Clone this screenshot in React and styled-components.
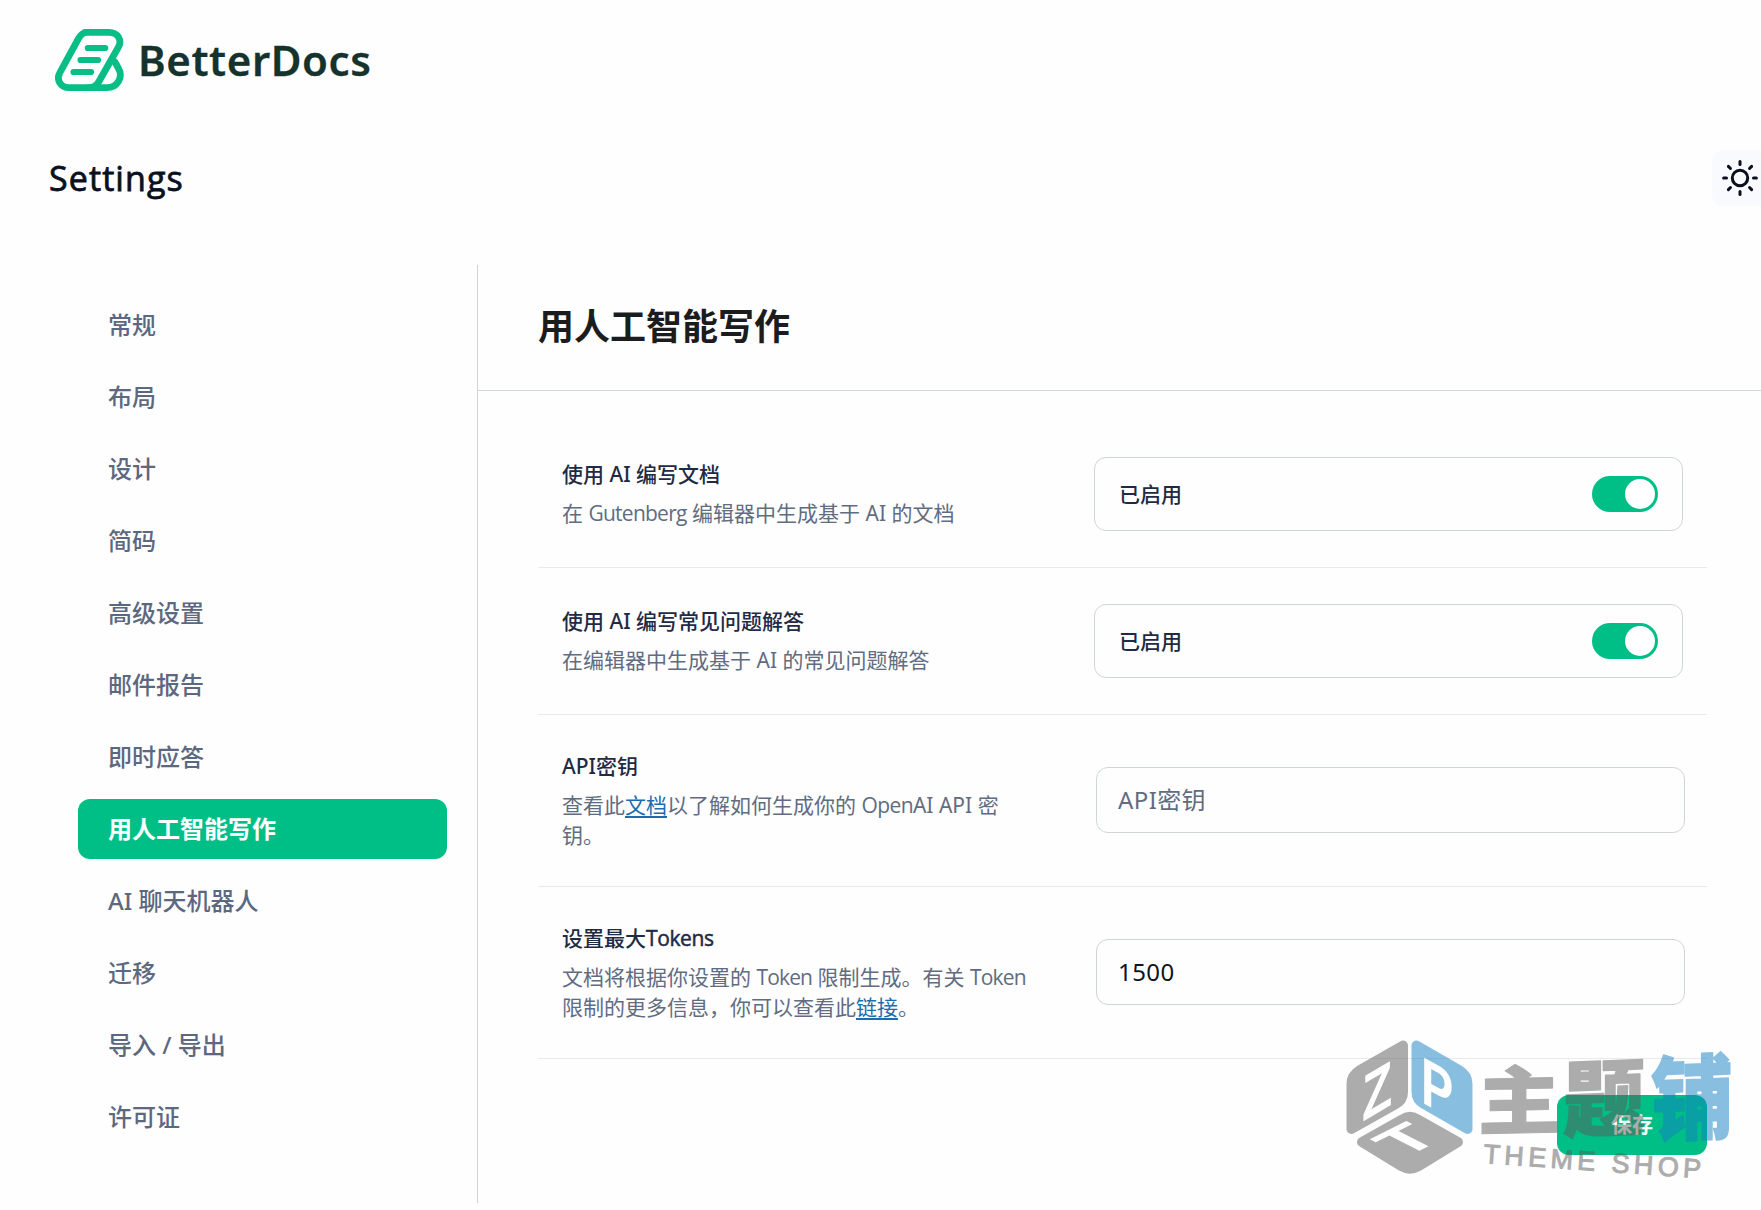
import React, { useState } from 'react';
import styled, { createGlobalStyle } from 'styled-components';

const GlobalStyle = createGlobalStyle`
  *, *::before, *::after { box-sizing: border-box; }
  body {
    margin: 0;
    background: #fefefe;
    color: #1d2939;
    font-family: 'Noto Sans', 'Noto Sans CJK SC', sans-serif;
    overflow: hidden;
  }
`;

const Page = styled.div`
  position: relative;
  width: 1761px;
  height: 1210px;
  overflow: hidden;
`;

const BrandBar = styled.header`
  display: flex;
  align-items: center;
  height: 120px;
  padding-left: 55px;
  gap: 14px;
`;

const BrandName = styled.span`
  color: #16322d;
  font-size: 42px;
  font-weight: 600;
  line-height: 60px;
  letter-spacing: 0.6px;
  -webkit-text-stroke: 0.3px #16322d;
`;

const TitleBar = styled.div`
  display: flex;
  align-items: center;
  justify-content: space-between;
  height: 56px;
  margin-top: 30px;
  padding-left: 49px;
`;

const PageTitle = styled.h1`
  margin: 0;
  color: #0b1020;
  font-family: 'Open Sans', 'Noto Sans', sans-serif;
  font-size: 34px;
  font-weight: 500;
  line-height: 48px;
  letter-spacing: 1.1px;
  -webkit-text-stroke: 0.8px #0b1020;
`;

const ThemeButton = styled.button`
  display: flex;
  align-items: center;
  width: 49px;
  height: 56px;
  padding: 0 0 0 8px;
  border: 0;
  border-radius: 12px 0 0 12px;
  background: #f8fafe;
`;

const Body = styled.div`
  display: flex;
  height: 938px;
  margin-top: 59px;
`;

const Sidebar = styled.nav`
  display: flex;
  flex-direction: column;
  gap: 12px;
  width: 478px;
  padding: 30px 30px 0 78px;
  border-right: 1px solid #d2d5d8;
`;

const NavItem = styled.a`
  display: flex;
  align-items: center;
  flex: none;
  height: 60px;
  padding-left: 30px;
  border-radius: 12px;
  background: ${(p) => (p.$active ? '#00bf86' : 'transparent')};
  color: ${(p) => (p.$active ? '#ffffff' : '#5c6880')};
  font-size: 24px;
  font-weight: ${(p) => (p.$active ? 700 : 500)};
  line-height: 36px;
  white-space: pre;
`;

const Panel = styled.main`
  display: flex;
  flex-direction: column;
  flex: 1;
`;

const PanelHeader = styled.div`
  display: flex;
  align-items: center;
  height: 126px;
  padding: 0 0 2px 60px;
  border-bottom: 1px solid #d2d8da;
`;

const PanelTitle = styled.h2`
  margin: 0;
  color: #1a1c1e;
  font-size: 36px;
  font-weight: 700;
  line-height: 50px;
`;

const Fields = styled.div`
  display: flex;
  flex-direction: column;
  padding: 30px 54px 0 60px;
`;

const FieldRow = styled.div`
  display: flex;
  align-items: center;
  justify-content: space-between;
  padding: 36px ${(p) => (p.$inset ? 22 : 24)}px 36px 24px;
  border-bottom: 1px solid #e8eaec;
`;

const FieldText = styled.div`
  display: flex;
  flex-direction: column;
  gap: 9px;
  width: 490px;
  padding-bottom: ${(p) => (p.$lifted ? 2 : 0)}px;
`;

const FieldTitle = styled.div`
  color: #1f2a44;
  font-size: 21px;
  font-weight: 500;
  line-height: 30px;
  white-space: nowrap;
`;

const FieldHelp = styled.div`
  color: #616c81;
  font-size: 21px;
  line-height: 30px;
  white-space: nowrap;
`;

const Word = styled.span`
  font-family: 'Open Sans', 'Noto Sans', sans-serif;
  letter-spacing: ${(p) => p.$track || 0}px;
  -webkit-text-stroke: ${(p) => (p.$strong ? 0.5 : 0)}px currentColor;
`;

const HelpLink = styled.a`
  color: #1c6cb0;
  text-decoration: underline;
  text-decoration-thickness: 2px;
  text-underline-offset: 3px;
`;

const ToggleBox = styled.div`
  display: flex;
  align-items: center;
  justify-content: space-between;
  width: 589px;
  height: 74px;
  padding: 0 24px 0 24px;
  border: 1px solid #d0d5d8;
  border-radius: 12px;
`;

const ToggleState = styled.span`
  padding-bottom: 1px;
  color: #1f2a44;
  font-size: 21px;
  font-weight: 500;
  line-height: 30px;
`;

const Switch = styled.button`
  display: flex;
  align-items: center;
  justify-content: ${(p) => (p.$on ? 'flex-end' : 'flex-start')};
  width: 66px;
  height: 36px;
  padding: 0 3px;
  border: 0;
  border-radius: 18px;
  background: ${(p) => (p.$on ? '#00bf86' : '#cdd3da')};
`;

const Knob = styled.span`
  width: 30px;
  height: 30px;
  border-radius: 50%;
  background: #ffffff;
`;

const TextInput = styled.input`
  width: 589px;
  height: 66px;
  margin: 0 0 1px;
  padding: 0 21px 2px;
  border: 1px solid #d0d5d8;
  border-radius: 12px;
  outline: 0;
  background: transparent;
  color: #0d1424;
  font-family: inherit;
  font-size: 24px;
  letter-spacing: 0.4px;
  &::placeholder { color: #616c81; opacity: 1; }
`;

const Actions = styled.div`
  display: flex;
  justify-content: flex-end;
  padding: 36px 54px 0 0;
`;

const SaveButton = styled.button`
  width: 150px;
  height: 60px;
  padding: 0 0 3px;
  border: 0;
  border-radius: 12px;
  background: #00bf86;
  color: #ffffff;
  font-family: inherit;
  font-size: 21px;
  font-weight: 700;
  line-height: 30px;
`;

const Watermark = styled.svg`
  position: absolute;
  left: 1340px;
  top: 1020px;
  opacity: 0.5;
  pointer-events: none;
`;

function LogoMark() {
  return (
    <svg width="69" height="62" viewBox="0 0 69 62" fill="none" stroke="#09bd86" strokeLinecap="round" strokeLinejoin="round">
      <path
        d="M30 3.4H54C63 3.4 67.5 11.5 63.2 18.5L43.5 53.2Q40.4 58.6 34 58.6H14C5.5 58.6 0.8 50.5 5 43.4L23.5 9.5Q27 3.4 32 3.4"
        strokeWidth="6.8"
      />
      <path d="M34 58.6H52C62.5 58.6 68.5 48 63.5 39.5Q61.5 35.5 59.5 32.5" strokeWidth="6.8" />
      <path d="M32.8 19H50.2M25.5 31H43M18.5 43H36" strokeWidth="6.2" />
    </svg>
  );
}

function SunIcon() {
  const rays = [0, 45, 90, 135, 180, 225, 270, 315];
  return (
    <svg width="40" height="40" viewBox="-20 -20 40 40" fill="none" stroke="#0a0f1e" strokeWidth="3" strokeLinecap="round">
      <circle r="7.7" />
      {rays.map((r) => (
        <path key={r} d="M0 -13.5V-16.4" transform={`rotate(${r})`} />
      ))}
    </svg>
  );
}

function ShopWatermark() {
  const grey = '#5c5c5c';
  const blue = '#1480c2';
  return (
    <Watermark width="421" height="190" viewBox="0 -10 421 190" aria-hidden="true">
      <g strokeWidth="10" strokeLinejoin="round">
        <path d="M63 15.5L20 40Q11.5 45 11.5 54V99L56 74Q63 70 63 62Z" fill={grey} stroke={grey} />
        <path d="M76.5 15.5L119 40Q127.5 45 127.5 54V99L84 74Q76.5 70 76.5 62Z" fill={blue} stroke={blue} />
        <path d="M62 89.5Q70 84 78 89.5L118 112L78 136.5Q70 141 62 136.5L22 112Z" fill={grey} stroke={grey} />
      </g>
      <g fill="#ffffff" fontFamily="'Liberation Sans', sans-serif" fontWeight="700" fontSize="62">
        <text transform="matrix(0.8 -0.47 0 1.04 22 92)">Z</text>
        <text transform="matrix(0.78 0.43 0 1.08 81 72)">P</text>
        <text transform="matrix(1 -0.5 0.84 0.43 65 128)">T</text>
      </g>
      <g fontFamily="'Noto Sans CJK SC', sans-serif" fontWeight="900" strokeLinejoin="round">
        <text transform="matrix(1.03 -0.02 0 0.93 138 99)" fontSize="80" fill={grey} stroke={grey} strokeWidth="1">主</text>
        <text transform="matrix(1 -0.04 0 1.02 223 101)" fontSize="82" fill={grey} stroke={grey} strokeWidth="1.4">题</text>
        <text transform="matrix(1 -0.04 0 1.12 311 104)" fontSize="82" fill={blue} stroke={blue} strokeWidth="1.6">铺</text>
      </g>
      <text
        transform="translate(143 133) rotate(4)"
        fontFamily="'Liberation Sans', sans-serif"
        fontSize="27"
        textLength="218"
        fill={grey}
        stroke={grey}
        strokeWidth="1"
      >
        THEME SHOP
      </text>
    </Watermark>
  );
}

const NAV = ['常规', '布局', '设计', '简码', '高级设置', '邮件报告', '即时应答', '用人工智能写作', 'AI 聊天机器人', '迁移', '导入 / 导出', '许可证'];

function ToggleField({ title, help }) {
  const [on, setOn] = useState(true);
  return (
    <FieldRow>
      <FieldText $lifted>
        <FieldTitle>{title}</FieldTitle>
        <FieldHelp>{help}</FieldHelp>
      </FieldText>
      <ToggleBox>
        <ToggleState>已启用</ToggleState>
        <Switch $on={on} onClick={() => setOn(!on)}>
          <Knob />
        </Switch>
      </ToggleBox>
    </FieldRow>
  );
}

function InputField({ title, help, ...input }) {
  return (
    <FieldRow $inset>
      <FieldText>
        <FieldTitle>{title}</FieldTitle>
        <FieldHelp>{help}</FieldHelp>
      </FieldText>
      <TextInput {...input} />
    </FieldRow>
  );
}

export default function App() {
  const [active, setActive] = useState('用人工智能写作');
  return (
    <Page>
      <GlobalStyle />
      <BrandBar>
        <LogoMark />
        <BrandName>BetterDocs</BrandName>
      </BrandBar>
      <TitleBar>
        <PageTitle>Settings</PageTitle>
        <ThemeButton>
          <SunIcon />
        </ThemeButton>
      </TitleBar>
      <Body>
        <Sidebar>
          {NAV.map((label) => (
            <NavItem key={label} $active={label === active} onClick={() => setActive(label)}>
              {label}
            </NavItem>
          ))}
        </Sidebar>
        <Panel>
          <PanelHeader>
            <PanelTitle>用人工智能写作</PanelTitle>
          </PanelHeader>
          <Fields>
            <ToggleField
              title="使用 AI 编写文档"
              help={<>在 <Word $track={-0.75}>Gutenberg</Word> 编辑器中生成基于 AI 的文档</>}
            />
            <ToggleField title="使用 AI 编写常见问题解答" help="在编辑器中生成基于 AI 的常见问题解答" />
            <InputField
              title="API密钥"
              help={<>查看此<HelpLink>文档</HelpLink>以了解如何生成你的 <Word $track={-0.6}>Open</Word>AI API 密<br />钥。</>}
              placeholder="API密钥"
            />
            <InputField
              title={<>设置最大<Word $strong $track={-0.4}>Tokens</Word></>}
              help={<>文档将根据你设置的 <Word $track={-0.85}>Token</Word> 限制生成。有关 <Word $track={-0.85}>Token</Word><br />限制的更多信息，你可以查看此<HelpLink>链接</HelpLink>。</>}
              defaultValue="1500"
            />
          </Fields>
          <Actions>
            <SaveButton>保存</SaveButton>
          </Actions>
        </Panel>
      </Body>
      <ShopWatermark />
    </Page>
  );
}
